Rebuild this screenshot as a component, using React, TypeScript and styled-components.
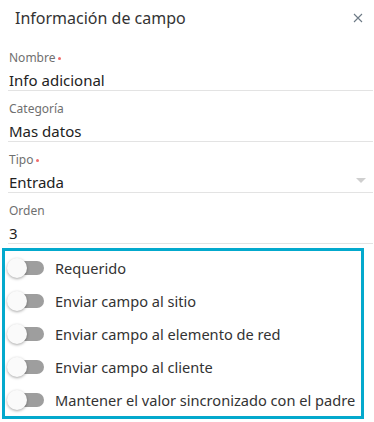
import React from "react";
import styled, { createGlobalStyle } from "styled-components";

const GlobalStyle = createGlobalStyle`
    html, body {
        margin: 0;
        padding: 0;
        background: #ffffff;
    }
    body {
        font-family: "Noto Sans", "Open Sans", sans-serif;
        color: #333333;
    }
`;

const Panel = styled.div`
    width: 374px;
    height: 422px;
    background: #ffffff;
    overflow: hidden;
`;

const Header = styled.div`
    height: 40px;
    display: flex;
    align-items: center;
    justify-content: space-between;
    padding: 0 6px 4px 15px;
    box-sizing: border-box;
`;

const Title = styled.div`
    font-size: 16px;
    line-height: 20px;
    color: #333333;
`;

const CloseButton = styled.button`
    width: 20px;
    height: 20px;
    border: none;
    background: none;
    padding: 0;
    display: flex;
    align-items: center;
    justify-content: center;
    cursor: pointer;
`;

const Form = styled.div`
    padding-left: 8px;
    padding-right: 1px;
`;

const Field = styled.div`
    position: relative;
    padding-top: 10px;
    border-bottom: 1px solid #e3e3e3;
`;

const Label = styled.div`
    font-size: 12px;
    line-height: 16px;
    color: #6f6f6f;
    padding-left: 1px;
    display: flex;
    align-items: center;
`;

const Required = styled.span`
    width: 3px;
    height: 3px;
    border-radius: 50%;
    background: #f06b6b;
    margin-left: 3px;
    margin-top: 1px;
`;

const Value = styled.div`
    margin-top: 4px;
    font-size: 15px;
    line-height: 20px;
    color: #222222;
    padding-left: 1px;
`;

const Arrow = styled.span`
    position: absolute;
    right: 7px;
    bottom: 9px;
    width: 0;
    height: 0;
    border-left: 5.5px solid transparent;
    border-right: 5.5px solid transparent;
    border-top: 5px solid #cfcfcf;
`;

const OptionsBox = styled.div`
    margin: 4px 0 0 2px;
    width: 362px;
    box-sizing: border-box;
    border: 3px solid #03a9cd;
`;

const OptionRow = styled.div`
    height: 33px;
    display: flex;
    align-items: center;
    padding-left: 2px;
`;

const SwitchRoot = styled.span`
    position: relative;
    width: 38px;
    height: 20px;
    flex-shrink: 0;
`;

const Track = styled.span`
    position: absolute;
    left: 7px;
    top: 3px;
    width: 30px;
    height: 14px;
    border-radius: 7px;
    background: #9e9e9e;
`;

const Thumb = styled.span`
    position: absolute;
    left: 0;
    top: 0;
    width: 20px;
    height: 20px;
    border-radius: 50%;
    background: #fafafa;
    box-shadow: 0 1px 3px rgba(0, 0, 0, 0.35);
`;

const OptionText = styled.span`
    margin-left: 10px;
    font-size: 14.6px;
    line-height: 20px;
    color: #333333;
    white-space: nowrap;
`;

const fields = [
    { label: "Nombre", value: "Info adicional", required: true },
    { label: "Categoría", value: "Mas datos" },
    { label: "Tipo", value: "Entrada", required: true, select: true },
    { label: "Orden", value: "3" },
];

const options = [
    "Requerido",
    "Enviar campo al sitio",
    "Enviar campo al elemento de red",
    "Enviar campo al cliente",
    "Mantener el valor sincronizado con el padre",
];

export default function App() {
    return (
        <>
            <GlobalStyle />
            <Panel>
                <Header>
                    <Title>Información de campo</Title>
                    <CloseButton aria-label="Cerrar">
                        <svg width="10" height="10" viewBox="0 0 10 10">
                            <path d="M1 1 L9 9 M9 1 L1 9" stroke="#6d7a86" strokeWidth="1.1" fill="none" />
                        </svg>
                    </CloseButton>
                </Header>
                <Form>
                    {fields.map((f) => (
                        <Field key={f.label}>
                            <Label>
                                {f.label}
                                {f.required && <Required />}
                            </Label>
                            <Value>{f.value}</Value>
                            {f.select && <Arrow />}
                        </Field>
                    ))}
                </Form>
                <OptionsBox>
                    {options.map((o) => (
                        <OptionRow key={o}>
                            <SwitchRoot>
                                <Track />
                                <Thumb />
                            </SwitchRoot>
                            <OptionText>{o}</OptionText>
                        </OptionRow>
                    ))}
                </OptionsBox>
            </Panel>
        </>
    );
}
